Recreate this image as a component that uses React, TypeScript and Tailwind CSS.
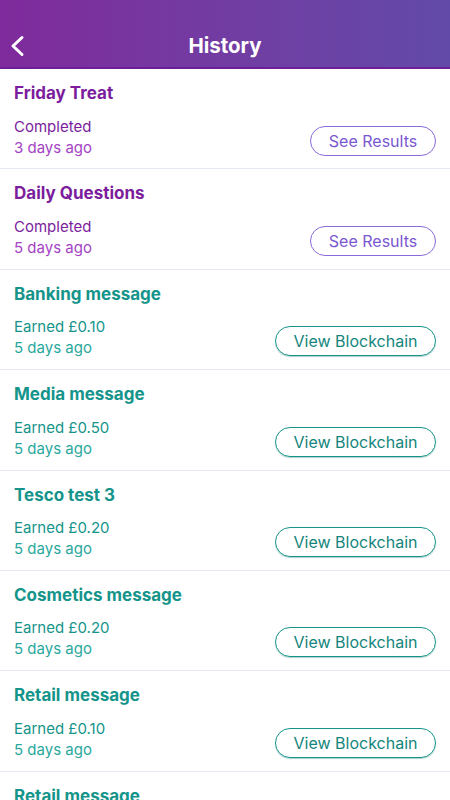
type Item = {
  title: string;
  status: string;
  when: string;
  kind: "survey" | "message";
};

const items: Item[] = [
  { title: "Friday Treat", status: "Completed", when: "3 days ago", kind: "survey" },
  { title: "Daily Questions", status: "Completed", when: "5 days ago", kind: "survey" },
  { title: "Banking message", status: "Earned £0.10", when: "5 days ago", kind: "message" },
  { title: "Media message", status: "Earned £0.50", when: "5 days ago", kind: "message" },
  { title: "Tesco test 3", status: "Earned £0.20", when: "5 days ago", kind: "message" },
  { title: "Cosmetics message", status: "Earned £0.20", when: "5 days ago", kind: "message" },
  { title: "Retail message", status: "Earned £0.10", when: "5 days ago", kind: "message" },
  { title: "Retail message", status: "Earned £0.10", when: "5 days ago", kind: "message" },
];

function Row({ item }: { item: Item }) {
  const survey = item.kind === "survey";
  return (
    <div className="h-[100.4px] shrink-0 border-b border-[#e6eaf7] px-[14px] pt-[12px]">
      <div
        className={
          survey
            ? "text-[17px] leading-[24px] font-bold text-[#7b1d9c]"
            : "text-[17px] leading-[24px] font-bold text-[#14948a]"
        }
      >
        {item.title}
      </div>
      <div className="flex items-start justify-between mt-[10.5px]">
        <div className="text-[15px] leading-[21px]">
          <div className={survey ? "text-[#7b1d9c]" : "text-[#14948a]"}>
            {item.status}
          </div>
          <div className={survey ? "text-[#a444c4]" : "text-[#2aa89d]"}>
            {item.when}
          </div>
        </div>
        {survey ? (
          <button className="mt-[10px] h-[30px] w-[126px] rounded-full border border-[#8a6ad9] text-[16px] text-[#7a58cf]">
            See Results
          </button>
        ) : (
          <button className="mt-[10px] h-[30px] w-[161px] rounded-full border border-[#14948a] text-[16px] text-[#14857c] shadow-[0_1px_1px_rgba(20,120,110,0.35)]">
            View Blockchain
          </button>
        )}
      </div>
    </div>
  );
}

export default function App() {
  return (
    <div
      className="w-[450px] h-[800px] overflow-hidden bg-white flex flex-col"
      style={{ fontFamily: "Inter, 'Noto Sans', sans-serif" }}
    >
      <div className="h-[69px] shrink-0 bg-gradient-to-r from-[#7f2a9c] to-[#624aa9] border-b-2 border-[#6c1f98] pt-[24px] relative">
        <div className="h-[44px] flex items-center justify-center">
          <span className="text-white text-[20.5px] font-bold">History</span>
        </div>
        {/* back chevron */}
        <svg
          className="absolute left-[9px] top-[35px]"
          width="17"
          height="22"
          viewBox="0 0 17 22"
          fill="none"
        >
          <polyline
            points="13,2.5 4,11 13,19.5"
            stroke="white"
            strokeWidth="3"
            strokeLinecap="round"
            strokeLinejoin="round"
          />
        </svg>
      </div>
      {items.map((it, i) => (
        <Row key={i} item={it} />
      ))}
    </div>
  );
}
